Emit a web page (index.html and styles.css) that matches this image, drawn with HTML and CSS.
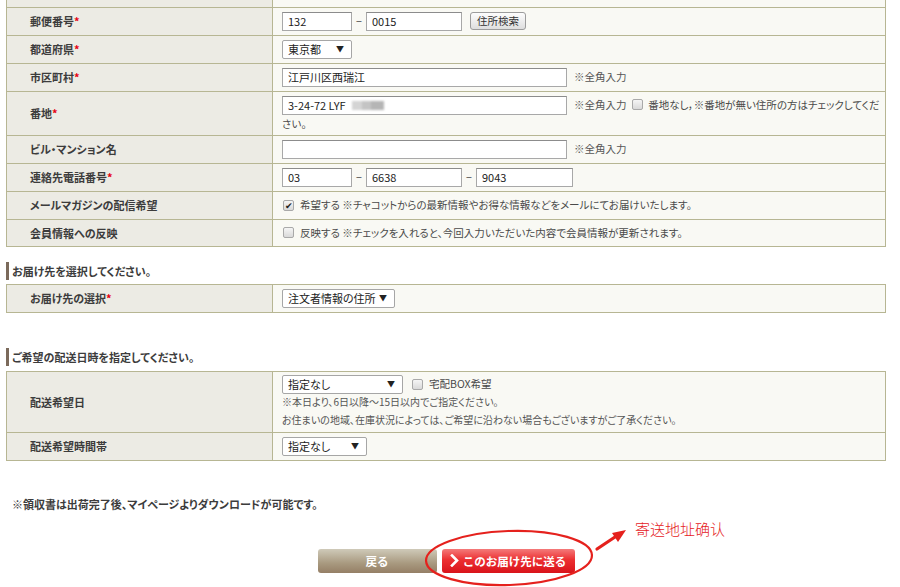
FILE: index.html
```html
<!DOCTYPE html>
<html lang="ja">
<head>
<meta charset="utf-8">
<title>お届け先の指定</title>
<link rel="stylesheet" href="styles.css">
</head>
<body>
<div class="page">
  <table class="form">
    <tr class="cut"><th></th><td></td></tr>
    <tr>
      <th>郵便番号<span class="req">*</span></th>
      <td><div class="line"><input class="in w70" value="132"><span class="dash">−</span><input class="in w96" value="0015"><button class="search">住所検索</button></div></td>
    </tr>
    <tr>
      <th>都道府県<span class="req">*</span></th>
      <td><div class="line"><span class="sel w70">東京都<span class="arr">▼</span></span></div></td>
    </tr>
    <tr>
      <th>市区町村<span class="req">*</span></th>
      <td><div class="line"><input class="in w285" value="江戸川区西瑞江"><span class="hint">※全角入力</span></div></td>
    </tr>
    <tr class="tall">
      <th>番地<span class="req">*</span></th>
      <td class="top"><span class="blurwrap"><input class="in w285" value="3-24-72 LYF"><span class="blur"></span></span><span class="hint">※全角入力</span> <span class="cb"></span> 番地なし，※番地が無い住所の方はチェックしてください。</td>
    </tr>
    <tr>
      <th>ビル・マンション名</th>
      <td><div class="line"><input class="in w285" value=""><span class="hint">※全角入力</span></div></td>
    </tr>
    <tr>
      <th>連絡先電話番号<span class="req">*</span></th>
      <td><div class="line"><input class="in w70" value="03"><span class="dash">−</span><input class="in w96" value="6638"><span class="dash">−</span><input class="in w97" value="9043"></div></td>
    </tr>
    <tr>
      <th>メールマガジンの配信希望</th>
      <td><div class="line"><span class="cb on">✔</span><span class="cbtext">希望する ※チャコットからの最新情報やお得な情報などをメールにてお届けいたします。</span></div></td>
    </tr>
    <tr class="last">
      <th>会員情報への反映</th>
      <td><div class="line"><span class="cb"></span><span class="cbtext">反映する ※チェックを入れると、今回入力いただいた内容で会員情報が更新されます。</span></div></td>
    </tr>
  </table>

  <h3 class="sec first">お届け先を選択してください。</h3>
  <table class="form">
    <tr>
      <th>お届け先の選択<span class="req">*</span></th>
      <td><div class="line"><span class="sel w113">注文者情報の住所<span class="arr">▼</span></span></div></td>
    </tr>
  </table>

  <h3 class="sec second">ご希望の配送日時を指定してください。</h3>
  <table class="form">
    <tr class="date">
      <th>配送希望日</th>
      <td class="top">
        <div class="line"><span class="sel w121">指定なし<span class="arr">▼</span></span><span class="cb gap"></span><span class="cbtext">宅配BOX希望</span></div>
        <p class="small">※本日より、6日以降〜15日以内でご指定ください。</p>
        <p class="small">お住まいの地域、在庫状況によっては、ご希望に沿わない場合もございますがご了承ください。</p>
      </td>
    </tr>
    <tr>
      <th>配送希望時間帯</th>
      <td><div class="line"><span class="sel w85">指定なし<span class="arr">▼</span></span></div></td>
    </tr>
  </table>

  <p class="note">※領収書は出荷完了後、マイページよりダウンロードが可能です。</p>

  <div class="actions">
    <button class="btn back">戻る</button>
    <button class="btn send"><svg class="chev" width="9" height="13" viewBox="0 0 9 13"><polyline points="2,1.5 7,6.5 2,11.5" fill="none" stroke="#fff" stroke-width="2.6" stroke-linecap="square"/></svg>このお届け先に送る</button>
  </div>

  <svg class="annot" width="900" height="587" viewBox="0 0 900 587">
    <ellipse cx="509" cy="558" rx="83" ry="27" fill="none" stroke="#e5211d" stroke-width="2.2" transform="rotate(-2 509 558)"/>
    <line x1="597" y1="549" x2="615" y2="537" stroke="#e5211d" stroke-width="3.2" stroke-linecap="round"/>
    <polygon points="626,530 618,542 612,533" fill="#e5211d"/>
  </svg>
  <span class="annot-text">寄送地址确认</span>
</div>
</body>
</html>
```

FILE: styles.css
```css
* { box-sizing: border-box; }

body {
  margin: 0;
  background: #fff;
  color: #3a3a3a;
  font-family: "Noto Sans CJK JP", "Noto Sans", sans-serif;
  font-size: 11px;
  font-feature-settings: "palt";
}

.page {
  position: relative;
  width: 900px;
  height: 587px;
  overflow: hidden;
  padding: 0 14px 0 6px;
}

.form {
  width: 880px;
  border-collapse: collapse;
}

.form tr { height: 28px; }
.form tr.cut { height: 7px; }
.form tr.tall { height: 44px; }
.form tr.last { height: 27px; }
.form tr.date { height: 61px; }

.form th,
.form td {
  border: 1px solid #b7b693;
  padding: 0;
}

.form tr.cut th,
.form tr.cut td { border-top: none; }

.form th {
  width: 266px;
  background: #ecebe4;
  text-align: left;
  padding-left: 23px;
  font-weight: bold;
  font-size: 11px;
  color: #3c3c3c;
  vertical-align: middle;
}

.form td {
  background: #f9f9f4;
  padding: 0 4px 0 9px;
  vertical-align: middle;
  color: #4a4a4a;
  font-size: 10.5px;
  line-height: 18px;
}

.form td.top {
  vertical-align: top;
  padding-top: 4px;
  padding-bottom: 2px;
}

.form tr.date td.top { padding-top: 3px; }

.req {
  color: #e60012;
  font-weight: bold;
}

.line {
  display: flex;
  align-items: center;
  white-space: nowrap;
}

.in {
  height: 19px;
  border: 1px solid #a8a8a8;
  border-top-color: #8c8c8c;
  background: #fff;
  padding: 0 5px;
  font-family: "Noto Sans CJK JP", "Noto Sans", sans-serif;
  font-size: 11px;
  color: #222;
  vertical-align: top;
  margin: 0;
}

.w70 { width: 70px; }
.w96 { width: 96px; }
.w97 { width: 97px; }
.w285 { width: 285px; }
.w85 { width: 85px; }
.w113 { width: 113px; }
.w121 { width: 121px; }

.dash {
  width: 14px;
  text-align: center;
  color: #444;
}

.search {
  margin-left: 8px;
  height: 18px;
  padding: 0 6px;
  border: 1px solid #9c9c9c;
  border-radius: 3px;
  background: linear-gradient(#fdfdfd, #dedede);
  font-family: "Noto Sans CJK JP", "Noto Sans", sans-serif;
  font-size: 10.5px;
  color: #333;
  line-height: 16px;
}

.sel {
  display: inline-flex;
  flex-shrink: 0;
  align-items: center;
  justify-content: space-between;
  height: 19px;
  border: 1px solid #a6a6a6;
  border-radius: 2px;
  background: #fff;
  padding: 0 7px 0 5px;
  font-size: 11px;
  color: #222;
  white-space: nowrap;
}

.arr {
  font-size: 8px;
  color: #222;
}

.hint {
  margin-left: 7px;
  color: #555;
}

.blurwrap {
  position: relative;
  display: inline-block;
  vertical-align: top;
}

.blur {
  position: absolute;
  left: 70px;
  top: 5px;
  width: 32px;
  height: 9px;
  background: linear-gradient(90deg, #d4d4d4 0 30%, #c4c4c4 30% 60%, #b5b5b5 60% 100%);
  filter: blur(1px);
}

.cb {
  display: inline-flex;
  align-items: center;
  justify-content: center;
  width: 11px;
  height: 11px;
  border: 1px solid #a9a9a9;
  border-radius: 2px;
  background: linear-gradient(#f5f5f5, #d9d9d9);
  vertical-align: -1px;
  margin: 0 3px;
  font-size: 9px;
  line-height: 1;
  color: #222;
}

.line .cb { margin: 0 0 0 1px; }
.line .cb.gap { margin-left: 9px; }

.cbtext { margin-left: 6px; }

.small {
  margin: 0;
  line-height: 18px;
  font-size: 10px;
  color: #555;
}

.line + .small { margin-top: -1px; }

.sec {
  margin: 0;
  height: 18px;
  line-height: 18px;
  border-left: 3px solid #7b6a5b;
  padding-left: 3px;
  font-size: 11px;
  font-weight: bold;
  color: #3c3c3c;
}

.sec.first { margin-top: 15px; margin-bottom: 4px; }
.sec.second { margin-top: 35px; margin-bottom: 5px; }

.note {
  margin: 35px 0 0 6px;
  font-size: 11px;
  font-weight: bold;
  color: #3c3c3c;
  line-height: 16px;
}

.actions {
  display: flex;
  justify-content: center;
  gap: 5px;
  margin-top: 37px;
  width: 880px;
}

.btn {
  height: 24px;
  border: none;
  border-radius: 3px;
  font-family: "Noto Sans CJK JP", "Noto Sans", sans-serif;
  font-size: 11.5px;
  font-weight: bold;
  color: #fff;
  padding: 0;
}

.back {
  width: 119px;
  background: linear-gradient(#cfcab9, #a8997f 60%, #957f66);
}

.send {
  width: 133px;
  display: flex;
  align-items: center;
  justify-content: center;
  gap: 4px;
  background: linear-gradient(#f47a7a, #ec2f31 45%, #d9131a);
}

.chev { display: block; }

.annot {
  position: absolute;
  left: 0;
  top: 0;
  pointer-events: none;
}

.annot-text {
  position: absolute;
  left: 635px;
  top: 519px;
  font-family: "Noto Sans CJK SC", sans-serif;
  font-size: 15px;
  color: #e5211d;
  font-weight: 300;
  line-height: 20px;
}
```
